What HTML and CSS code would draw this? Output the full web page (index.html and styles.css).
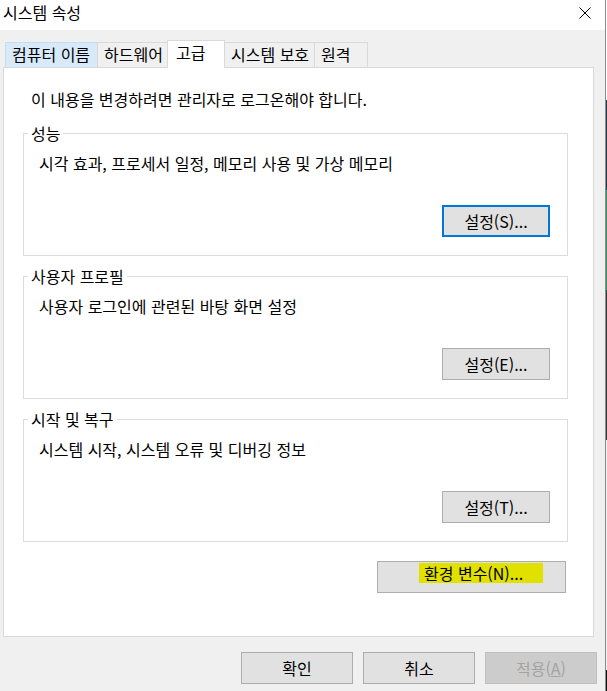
FILE: index.html
```html
<!DOCTYPE html>
<html lang="ko">
<head>
<meta charset="utf-8">
<title>시스템 속성</title>
<link rel="stylesheet" href="styles.css">
</head>
<body>
<div class="window">
  <div class="titlebar">
    <span class="title">시스템 속성</span>
    <svg class="close" width="12" height="12" viewBox="0 0 12 12"><path d="M0.5 0.5 L11.5 11.5 M11.5 0.5 L0.5 11.5" stroke="#000" stroke-width="1" fill="none"/></svg>
  </div>
  <div class="body">
    <div class="tabs">
      <div class="tab tab-name hover">컴퓨터 이름</div>
      <div class="tab tab-hw">하드웨어</div>
      <div class="tab tab-adv selected">고급</div>
      <div class="tab tab-prot">시스템 보호</div>
      <div class="tab tab-remote">원격</div>
    </div>
    <div class="panel">
      <p class="notice">이 내용을 변경하려면 관리자로 로그온해야 합니다.</p>
      <fieldset class="group">
        <legend>성능</legend>
        <p class="desc">시각 효과, 프로세서 일정, 메모리 사용 및 가상 메모리</p>
        <button class="btn focus">설정(S)...</button>
      </fieldset>
      <fieldset class="group">
        <legend>사용자 프로필</legend>
        <p class="desc">사용자 로그인에 관련된 바탕 화면 설정</p>
        <button class="btn">설정(E)...</button>
      </fieldset>
      <fieldset class="group">
        <legend>시작 및 복구</legend>
        <p class="desc">시스템 시작, 시스템 오류 및 디버깅 정보</p>
        <button class="btn">설정(T)...</button>
      </fieldset>
      <button class="btn env"><span class="mark">환경 변수(N)...</span></button>
    </div>
    <div class="actions">
      <button class="btn act">확인</button>
      <button class="btn act">취소</button>
      <button class="btn act disabled">적용(<u>A</u>)</button>
    </div>
  </div>
</div>
<div class="desktop"></div>
</body>
</html>
```
FILE: styles.css
```css
* { box-sizing: border-box; }
html, body { margin: 0; padding: 0; }
body {
  width: 607px;
  height: 691px;
  overflow: hidden;
  display: flex;
  background: #f0f0f0;
  font-family: "Noto Sans CJK KR", "Noto Sans", sans-serif;
  font-size: 16px;
  line-height: 20px;
  color: #000;
}
.window {
  width: 606px;
  height: 691px;
  border-right: 1px solid #8c8c8c;
  background: #f0f0f0;
  display: flex;
  flex-direction: column;
}
.desktop {
  width: 1px;
  height: 691px;
  background: linear-gradient(#ffffff 0 100px, #2c3a4b 100px 190px, #3a8e66 190px 290px, #3b3b3b 290px 440px, #f0f0f0 440px 670px, #111 670px);
}
.titlebar {
  height: 30px;
  background: #fff;
  display: flex;
  align-items: flex-start;
  justify-content: space-between;
  padding: 2px 0 0 3px;
}
.close { margin: 5px 14px 0 0; }
.body {
  display: flex;
  flex-direction: column;
}
.tabs {
  display: flex;
  align-items: flex-end;
  height: 27px;
  margin-top: 10px;
  padding-left: 5px;
}
.tab {
  height: 25px;
  border: 1px solid #d9d9d9;
  border-bottom: none;
  padding: 1px 0 0 6px;
  margin-left: -1px;
  background: #f0f0f0;
  white-space: nowrap;
}
.tab:first-child { margin-left: 0; }
.tab.hover { background: #d8eaf9; border-color: #c6dcef; }
.tab.selected {
  height: 28px;
  margin-bottom: -1px;
  background: #fff;
  position: relative;
  z-index: 1;
  padding: 1px 0 0 8px;
}
.tab-name { width: 93px; }
.tab-hw { width: 71px; }
.tab-adv { width: 58px; }
.tab-prot { width: 91px; }
.tab-remote { width: 54px; }
.panel {
  margin-left: 3px;
  width: 591px;
  height: 570px;
  background: #fff;
  border: 1px solid #d9d9d9;
  padding: 21px 0 0 0;
  display: flex;
  flex-direction: column;
  align-items: flex-start;
}
.notice { margin: 0 0 14px 27px; }
.group {
  margin: 0 0 10px 19px;
  width: 545px;
  border: 1px solid #dcdcdc;
  padding: 10px 17px 18px 15px;
  display: flex;
  flex-direction: column;
  align-items: flex-end;
  min-inline-size: 0;
}
.group legend {
  padding: 0 3px;
  margin-left: -11px;
  line-height: 20px;
}
.desc { margin: 0; align-self: flex-start; }
.btn {
  font: inherit;
  line-height: 20px;
  color: #000;
  background: #e1e1e1;
  border: 1px solid #adadad;
  border-radius: 0;
  height: 32px;
  padding: 0;
  margin: 0;
  text-align: center;
}
.group .btn { width: 108px; margin-top: 32px; }
.btn.focus { border: 2px solid #0078d7; }
.env {
  width: 189px;
  margin: 9px 27px 0 0;
  align-self: flex-end;
  display: flex;
  align-items: flex-start;
  justify-content: flex-start;
  padding: 1px 0 0 41px;
}
.mark {
  background: #e1e100;
  width: 124px;
  height: 20px;
  padding-left: 5px;
  text-align: left;
}
.actions {
  display: flex;
  justify-content: flex-end;
  gap: 10px;
  padding: 15px 8px 0 0;
}
.act { width: 112px; }
.btn.disabled {
  background: #cccccc;
  border-color: #bfbfbf;
  color: #a3a3a3;
}
```
